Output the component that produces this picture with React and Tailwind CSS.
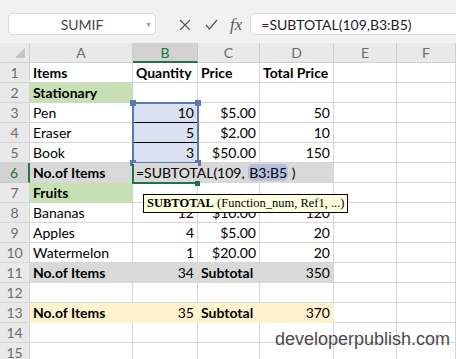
import React from "react";

const cellFont = { fontFamily: "Lato, 'Noto Sans', sans-serif" };

const GRAY = "bg-[#d9d9d9] border-[#d9d9d9]";
const GREEN = "bg-[#c6e0b4] border-[#c6e0b4]";
const YELLOW = "bg-[#fff2cc] border-[#fff2cc]";
const BLUE = "bg-[#d9e1f2]";

// each row: [A, B, C, D] cells, a cell is { v, b (bold), r (right align), f (fill classes) }
const rows = [
  [{ v: "Items", b: true }, { v: "Quantity", b: true }, { v: "Price", b: true }, { v: "Total Price", b: true }],
  [{ v: "Stationary", b: true, f: GREEN }, {}, {}, {}],
  [{ v: "Pen" }, { v: "10", r: true, f: BLUE }, { v: "$5.00", r: true }, { v: "50", r: true }],
  [{ v: "Eraser" }, { v: "5", r: true, f: BLUE }, { v: "$2.00", r: true }, { v: "10", r: true }],
  [{ v: "Book" }, { v: "3", r: true, f: BLUE }, { v: "$50.00", r: true }, { v: "150", r: true }],
  [{ v: "No.of Items", b: true, f: GRAY }, { edit: true, f: GRAY }, { f: GRAY }, { f: GRAY }],
  [{ v: "Fruits", b: true, f: GREEN }, {}, {}, {}],
  [{ v: "Bananas" }, { v: "12", r: true }, { v: "$10.00", r: true }, { v: "120", r: true }],
  [{ v: "Apples" }, { v: "4", r: true }, { v: "$5.00", r: true }, { v: "20", r: true }],
  [{ v: "Watermelon" }, { v: "1", r: true }, { v: "$20.00", r: true }, { v: "20", r: true }],
  [{ v: "No.of Items", b: true, f: GRAY }, { v: "34", r: true, f: GRAY }, { v: "Subtotal", b: true, f: GRAY }, { v: "350", r: true, f: GRAY }],
  [{}, {}, {}, {}],
  [{ v: "No.of Items", b: true, f: YELLOW }, { v: "35", r: true, f: YELLOW }, { v: "Subtotal", b: true, f: YELLOW }, { v: "370", r: true, f: YELLOW }],
  [{}, {}, {}, {}],
  [{}, {}, {}, {}],
];

const Cell = ({ c }) => (
  <div
    className={`h-5 border-r border-b flex items-center px-[3px] text-[14px] text-black whitespace-nowrap ${
      c.f || "border-[#d6d6d6]"
    } ${c.r ? "justify-end" : "justify-start"} ${c.b ? "font-bold" : ""} ${c.edit ? "relative z-10 overflow-visible" : "overflow-hidden"}`}
  >
    {c.edit ? (
      <span className="whitespace-nowrap">
        =SUBTOTAL(109,{" "}
        <span className="bg-[#b4c0dc] rounded-[5px] px-[1px]">B3:B5</span> )
      </span>
    ) : (
      c.v
    )}
  </div>
);

const ColHead = ({ label, active }) => (
  <div
    className={`h-5 flex items-center justify-center text-[14px] border-r ${
      active
        ? "bg-[#d2d2d2] text-[#217346] border-b-2 border-b-[#217346] border-r-[#c8c8c8]"
        : "bg-[#e9e9e9] text-[#6d6d6d] border-b border-[#cfcfcf]"
    }`}
  >
    {label}
  </div>
);

const App = () => {
  return (
    <div className="relative w-[456px] h-[359px] overflow-hidden bg-white" style={cellFont}>
      {/* formula bar */}
      <div className="h-[43px] bg-[#f1f1f1] flex items-start pt-[13px] pl-2">
        <div className="w-[148px] h-[22px] bg-white border border-[#dadada] rounded-[5px] flex items-center justify-center relative">
          <span className="text-[14px] text-[#444]">SUMIF</span>
          <span className="absolute right-[3px] top-[5px] text-[7px] text-[#999]">▼</span>
        </div>
        <div className="flex items-center h-[22px] ml-[23px] gap-[15px] text-[#5a5a5a]">
          <svg width="12" height="12" viewBox="0 0 12 12" className="mt-[1px]">
            <path d="M1 1 L11 11 M11 1 L1 11" stroke="#5a5a5a" strokeWidth="1.2" fill="none" />
          </svg>
          <svg width="13" height="11" viewBox="0 0 13 11" className="-ml-[1px]">
            <path d="M1 6 L4.5 10 L12 1" stroke="#5a5a5a" strokeWidth="1.3" fill="none" />
          </svg>
          <span
            className="italic text-[17px] text-[#5a5a5a] -ml-[3px] leading-none"
            style={{ fontFamily: "'Liberation Serif', serif" }}
          >
            fx
          </span>
        </div>
        <div className="ml-[8px] flex-1 h-[22px] bg-white border border-r-0 border-[#dadada] rounded-l-[5px] flex items-center pl-[10px]">
          <span className="text-[14px] text-[#222]">=SUBTOTAL(109,B3:B5)</span>
        </div>
      </div>

      {/* sheet */}
      <div className="grid grid-cols-[30px_103px_65px_62px_74px_63px_1fr]">
        <div className="h-5 bg-[#e9e9e9] border-r border-b border-[#cfcfcf] relative">
          <div className="absolute right-[4px] bottom-[4px] w-0 h-0 border-l-[10px] border-l-transparent border-b-[10px] border-b-[#c4c4c4]" />
        </div>
        <ColHead label="A" />
        <ColHead label="B" active />
        <ColHead label="C" />
        <ColHead label="D" />
        <ColHead label="E" />
        <ColHead label="F" />

        {rows.map((r, i) => (
          <React.Fragment key={i}>
            <div
              className={`h-5 flex items-center justify-center text-[14px] border-b ${
                i === 5
                  ? "bg-[#d2d2d2] text-[#217346] border-r-2 border-r-[#217346] border-b-[#c8c8c8]"
                  : "bg-[#e9e9e9] text-[#6d6d6d] border-r border-[#d6d6d6]"
              }`}
            >
              {i + 1}
            </div>
            {r.map((c, j) => (
              <Cell key={j} c={c} />
            ))}
            <Cell c={{}} />
            <Cell c={{}} />
          </React.Fragment>
        ))}
      </div>

      {/* selection B3:B5 */}
      <div className="absolute left-[132px] top-[102px] w-[67px] h-[62px] border-2 border-[#5b79ad] pointer-events-none" />
      <div className="absolute left-[130px] top-[100px] w-[6px] h-[6px] bg-[#5b79ad]" />
      <div className="absolute left-[195px] top-[100px] w-[6px] h-[6px] bg-[#5b79ad]" />
      <div className="absolute left-[130px] top-[160px] w-[6px] h-[6px] bg-[#5b79ad]" />
      <div className="absolute left-[195px] top-[160px] w-[6px] h-[6px] bg-[#5b79ad]" />

      {/* active cell B6 */}
      <div className="absolute left-[132px] top-[164px] w-[67px] h-[20px] border-l-2 border-b-2 border-[#217346] pointer-events-none z-20" />
      <div className="absolute left-[195px] top-[181px] w-[5px] h-[5px] bg-[#217346] z-20" />

      {/* function tooltip */}
      <div
        className="absolute left-[143px] top-[194px] w-[205px] h-[19px] bg-[#ffffe1] border border-black flex items-center pl-[3px] text-[12.5px] text-black z-30 whitespace-nowrap"
        style={{ fontFamily: "'Liberation Serif', serif" }}
      >
        <span className="font-bold">SUBTOTAL</span>&nbsp;(Function_num, Ref1, ...)
      </div>

      {/* watermark */}
      <div
        className="absolute left-[275px] top-[326px] text-[18px] text-[#4a4a4a] z-30"
        style={{ fontFamily: "'Liberation Sans', Arial, sans-serif" }}
      >
        developerpublish.com
      </div>
    </div>
  );
};

export default App;
